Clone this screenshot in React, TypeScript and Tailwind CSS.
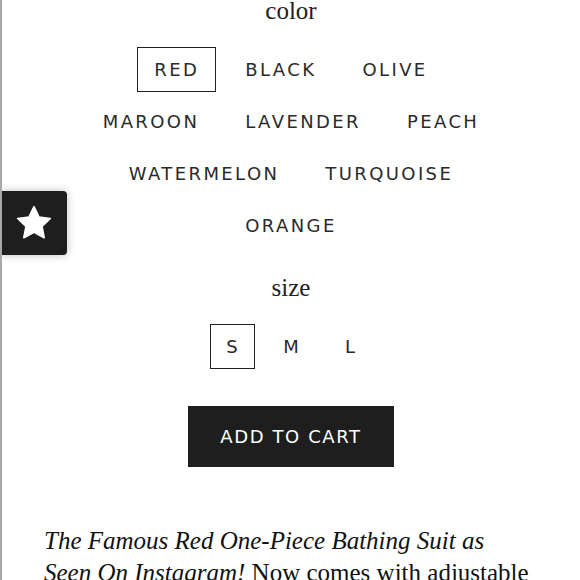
import React from "react";

const colors = [
    ["RED", "BLACK", "OLIVE"],
    ["MAROON", "LAVENDER", "PEACH"],
    ["WATERMELON", "TURQUOISE"],
    ["ORANGE"],
];

const sizes = ["S", "M", "L"];

function Option({ label, active }: { label: string; active?: boolean }) {
    return (
        <div
            className={`flex h-[45px] items-center justify-center px-[16px] text-[18px] tracking-[2.4px] text-[#2a2a2a] ${
                active ? "border-[1.5px] border-[#222]" : "border-[1.5px] border-transparent"
            }`}
        >
            {label}
        </div>
    );
}

function StarBadge() {
    return (
        <div className="absolute left-[-2px] top-[191px] flex h-[64px] w-[67px] items-center justify-center rounded-r-[4px] bg-[#1e1e1e] shadow-[0_0_8px_rgba(0,0,0,0.25)]">
            <svg width="40" height="40" viewBox="0 0 24 24" fill="white">
                <path d="M12 2.2l3 6.2 6.8.9-5 4.7 1.3 6.8L12 17.5l-6.1 3.3 1.3-6.8-5-4.7 6.8-.9z" strokeLinejoin="round" stroke="white" strokeWidth="1" />
            </svg>
        </div>
    );
}

export default function App() {
    return (
        <div className="relative h-[580px] w-[580px] overflow-hidden border-l-[2px] border-[#a8a8a8] bg-white">
            <StarBadge />
            <div className="flex flex-col items-center">
                <h2 className="mt-[-4px] font-['Liberation_Serif',serif] text-[25px] leading-[30px] text-[#222]">color</h2>
                <div className="mt-[21px] flex flex-col items-center gap-[7px] font-['DejaVu_Sans',sans-serif]">
                    {colors.map((row, i) => (
                        <div key={i} className="flex gap-[12px]">
                            {row.map((c) => (
                                <Option key={c} label={c} active={c === "RED"} />
                            ))}
                        </div>
                    ))}
                </div>
                <h2 className="mt-[25px] font-['Liberation_Serif',serif] text-[25px] leading-[30px] text-[#222]">size</h2>
                <div className="mt-[21px] flex gap-[14px] font-['DejaVu_Sans',sans-serif]">
                    {sizes.map((s) => (
                        <div
                            key={s}
                            className={`flex h-[45px] w-[45px] items-center justify-center text-[18px] text-[#2a2a2a] ${
                                s === "S" ? "border-[1.5px] border-[#222]" : "border-[1.5px] border-transparent"
                            }`}
                        >
                            {s}
                        </div>
                    ))}
                </div>
                <button className="mt-[37px] h-[61px] w-[206px] bg-[#1e1e1e] font-['DejaVu_Sans',sans-serif] text-[18px] tracking-[1.6px] text-white">
                    ADD TO CART
                </button>
            </div>
            <p className="mt-[58px] pl-[42px] pr-[20px] font-['Liberation_Serif',serif] text-[25px] leading-[32px] text-[#111]">
                <em>
                    The Famous Red One-Piece Bathing Suit as
                    <br />
                    Seen On Instagram!
                </em>{" "}
                Now comes with adjustable
                <br />
                straps and a lined front.
            </p>
        </div>
    );
}
